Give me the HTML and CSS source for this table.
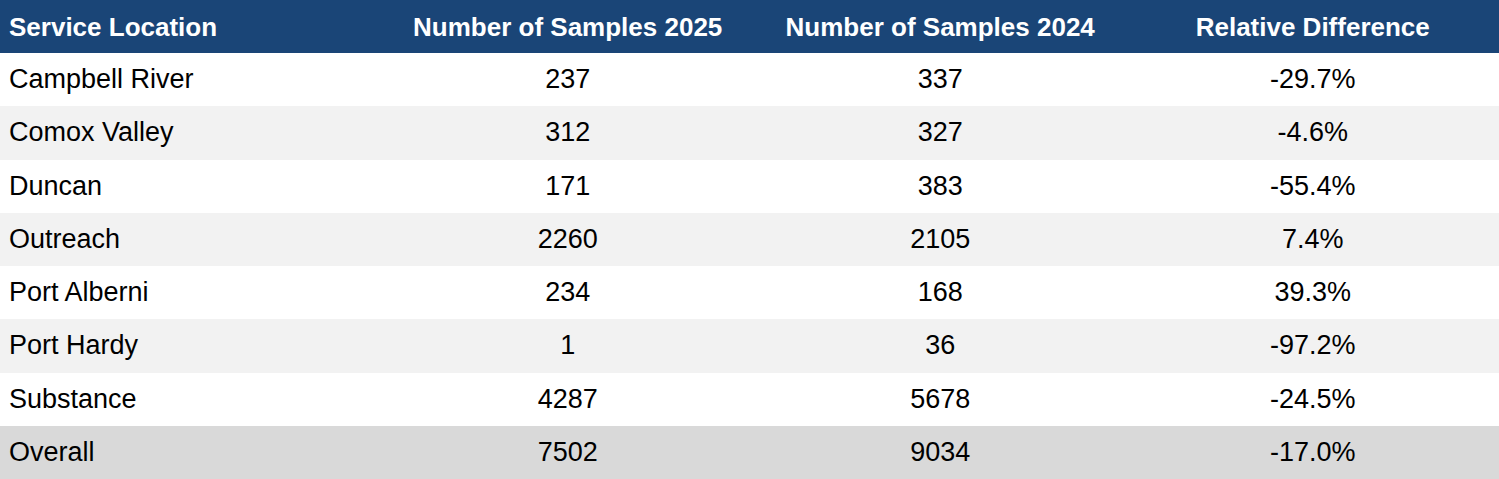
FILE: index.html
```html
<!DOCTYPE html>
<html lang="en">
<head>
<meta charset="utf-8">
<title>Samples by Service Location</title>
<link rel="stylesheet" href="styles.css">
</head>
<body>
<table class="data-table">
  <thead>
    <tr class="head-row">
      <th class="col-loc">Service Location</th>
      <th>Number of Samples 2025</th>
      <th>Number of Samples 2024</th>
      <th>Relative Difference</th>
    </tr>
  </thead>
  <tbody>
    <tr><td class="col-loc">Campbell River</td><td>237</td><td>337</td><td>-29.7%</td></tr>
    <tr class="alt"><td class="col-loc">Comox Valley</td><td>312</td><td>327</td><td>-4.6%</td></tr>
    <tr><td class="col-loc">Duncan</td><td>171</td><td>383</td><td>-55.4%</td></tr>
    <tr class="alt"><td class="col-loc">Outreach</td><td>2260</td><td>2105</td><td>7.4%</td></tr>
    <tr><td class="col-loc">Port Alberni</td><td>234</td><td>168</td><td>39.3%</td></tr>
    <tr class="alt"><td class="col-loc">Port Hardy</td><td>1</td><td>36</td><td>-97.2%</td></tr>
    <tr><td class="col-loc">Substance</td><td>4287</td><td>5678</td><td>-24.5%</td></tr>
    <tr class="total"><td class="col-loc">Overall</td><td>7502</td><td>9034</td><td>-17.0%</td></tr>
  </tbody>
</table>
</body>
</html>
```
FILE: styles.css
```css
html, body {
  margin: 0;
  padding: 0;
  background: #ffffff;
}
body {
  font-family: "Liberation Sans", Arial, sans-serif;
  color: #000000;
}
.data-table {
  width: 1499px;
  border-collapse: collapse;
  table-layout: fixed;
}
.data-table th,
.data-table td {
  width: 25%;
  text-align: center;
  padding: 0;
  height: 53.25px;
  font-size: 27px;
  line-height: 1;
  white-space: nowrap;
}
.data-table th {
  background: #1a4577;
  color: #ffffff;
  font-weight: 700;
  font-size: 26px;
  height: 53px;
}
.data-table .col-loc {
  text-align: left;
  padding-left: 9px;
}
.alt td {
  background: #f2f2f2;
}
.total td {
  background: #d9d9d9;
}
```
